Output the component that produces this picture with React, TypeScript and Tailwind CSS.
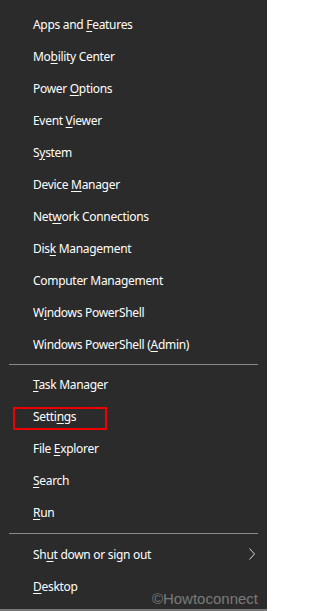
import React from "react";

type Item = { pre: string; key: string; post: string };

const GROUP1: Item[] = [
  { pre: "Apps and ", key: "F", post: "eatures" },
  { pre: "Mo", key: "b", post: "ility Center" },
  { pre: "Power ", key: "O", post: "ptions" },
  { pre: "Event ", key: "V", post: "iewer" },
  { pre: "S", key: "y", post: "stem" },
  { pre: "Device ", key: "M", post: "anager" },
  { pre: "Net", key: "w", post: "ork Connections" },
  { pre: "Dis", key: "k", post: " Management" },
  { pre: "Computer Mana", key: "g", post: "ement" },
  { pre: "W", key: "i", post: "ndows PowerShell" },
  { pre: "Windows PowerShell (", key: "A", post: "dmin)" },
];

const GROUP2: Item[] = [
  { pre: "", key: "T", post: "ask Manager" },
  { pre: "Setti", key: "n", post: "gs" },
  { pre: "File ", key: "E", post: "xplorer" },
  { pre: "", key: "S", post: "earch" },
  { pre: "", key: "R", post: "un" },
];

function Row({ item, children }: { item: Item; children?: React.ReactNode }) {
  return (
    <div className="relative flex h-8 items-center pl-[33px] pr-3">
      <span className="whitespace-nowrap pt-px">
        {item.pre}
        <span className="underline decoration-1 underline-offset-[2px]">{item.key}</span>
        {item.post}
      </span>
      {children}
    </div>
  );
}

export default function App() {
  return (
    <div
      className="relative h-[611px] w-[267px] overflow-hidden border-b-2 border-[#787878] bg-[#2b2b2b] pt-2 text-[12px] tracking-[-0.3px] text-white"
      style={{ fontFamily: '"Noto Sans", "Open Sans", sans-serif' }}
    >
      {GROUP1.map((it) => (
        <Row key={it.pre + it.key} item={it} />
      ))}
      <div className="mx-[9px] mt-[4px] mb-[3px] h-px bg-[#8a8a8a]" />
      {GROUP2.map((it) => (
        <Row key={it.pre + it.key} item={it}>
          {it.key === "n" && (
            <div className="absolute left-[13px] top-[7px] h-[23px] w-[94px] border-2 border-[#ee0000]" />
          )}
        </Row>
      ))}
      <div className="mx-[9px] mt-[5px] mb-[4px] h-px bg-[#8a8a8a]" />
      <Row item={{ pre: "Sh", key: "u", post: "t down or sign out" }}>
        <svg
          className="absolute right-[12px] top-[10px]"
          width="6"
          height="12"
          viewBox="0 0 6 12"
          fill="none"
        >
          <path d="M0.5 0.5 L5.5 6 L0.5 11.5" stroke="#cfd6dc" strokeWidth="1" />
        </svg>
      </Row>
      <Row item={{ pre: "", key: "D", post: "esktop" }} />
      <div
        className="absolute right-[9px] bottom-[3px] text-[15px] leading-none tracking-normal text-[#7a7a7a]"
        style={{ fontFamily: '"Liberation Sans", Arial, sans-serif' }}
      >
        ©Howtoconnect
      </div>
    </div>
  );
}
